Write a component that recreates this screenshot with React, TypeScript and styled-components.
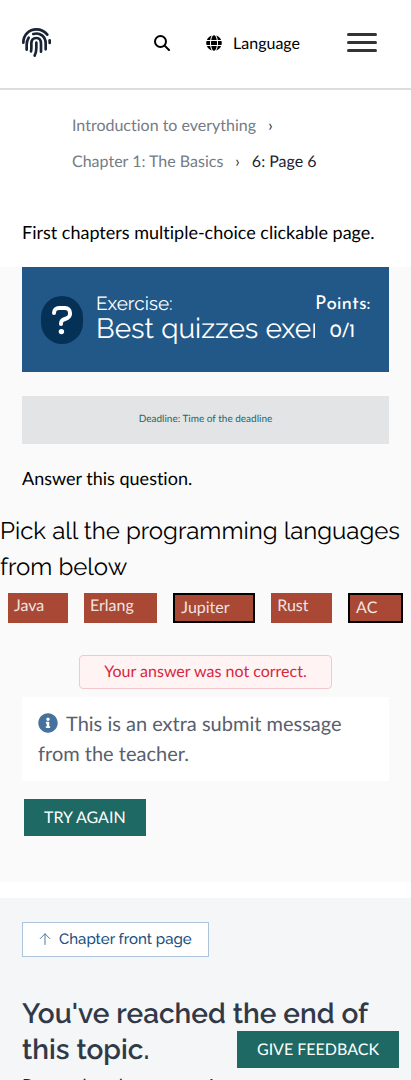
import React from "react";
import styled, { createGlobalStyle } from "styled-components";
import { FaGlobe, FaInfoCircle } from "react-icons/fa";

const body = `Lato, "Open Sans", sans-serif`;
const heading = `Raleway, Lato, "Open Sans", sans-serif`;
const display = `"Josefin Sans", Lato, sans-serif`;

const GlobalStyle = createGlobalStyle`
  *, *::before, *::after { box-sizing: border-box; }
  body {
    margin: 0;
    background: #fff;
    color: #000;
    font-family: ${body};
    font-size: 18px;
    font-variant-ligatures: no-common-ligatures;
    text-rendering: geometricPrecision;
    -webkit-font-smoothing: antialiased;
  }
  h1, h2, p, ol { margin: 0; padding: 0; }
  button { font-family: inherit; text-rendering: inherit; cursor: pointer; }
`;

const Header = styled.header`
  display: flex;
  align-items: center;
  height: 90px;
  padding: 0 34px 4px 22px;
  border-bottom: 2px solid #dcdcdc;
`;

const LogoLink = styled.a`
  display: flex;
  margin-right: auto;
`;

const NavButton = styled.button<{ $gap: number }>`
  display: flex;
  align-items: center;
  gap: 11px;
  padding: 2px 0 0;
  margin-right: ${(p) => p.$gap}px;
  border: 0;
  background: none;
  color: #000;
  font-size: 16px;
  line-height: 25px;
`;

const MenuButton = styled.button`
  display: flex;
  flex-direction: column;
  gap: 5px;
  width: 30px;
  padding: 0;
  border: 0;
  background: none;
`;

const MenuBar = styled.span`
  height: 3px;
  border-radius: 2px;
  background: #333;
`;

const Breadcrumbs = styled.nav`
  padding: 18px 72px 0;
`;

const CrumbList = styled.ol`
  display: flex;
  flex-wrap: wrap;
  list-style: none;
  font-size: 16px;
  line-height: 36px;
`;

const Crumb = styled.li`
  color: #1a2333;

  &:not(:last-child)::after {
    content: "›";
    margin: 0 12px;
    color: #333;
  }
`;

const CrumbLink = styled.a`
  color: #767b85;
  text-decoration: none;
`;

const Paragraph = styled.p`
  padding: 0 22px;
  font-size: 18px;
  line-height: 30px;
`;

const Intro = styled(Paragraph)`
  margin: 37px 0 20px;
`;

const Exercise = styled.section`
  padding-bottom: 46px;
  background: #fafafa;
`;

const ExerciseHeader = styled.div`
  display: flex;
  align-items: center;
  height: 105px;
  margin: 0 22px 24px;
  padding: 0 19px;
  background: #215887;
  color: #fff;
`;

const QuestionBadge = styled.span`
  display: flex;
  flex: none;
  align-items: center;
  justify-content: center;
  width: 42px;
  height: 48px;
  margin-right: 13px;
  border-radius: 21px;
  background: #063157;
`;

const ExerciseTitle = styled.h2`
  flex: 1;
  min-width: 0;
  overflow: hidden;
  padding-bottom: 2px;
  font-family: ${heading};
  font-size: 28px;
  font-weight: 400;
  line-height: 30px;
  white-space: nowrap;
`;

const ExerciseLabel = styled.span`
  display: block;
  font-size: 19px;
  line-height: 20px;
`;

const Points = styled.div`
  flex: none;
  padding-bottom: 1px;
  font-family: ${display};
  font-size: 19px;
  line-height: 28px;
  text-align: center;
`;

const Deadline = styled.div`
  margin: 0 22px 19px;
  padding-bottom: 2px;
  background: #e2e4e6;
  color: #1f6964;
  font-size: 10px;
  line-height: 46px;
  text-align: center;
`;

const QuizTitle = styled.h2`
  margin-top: 20px;
  font-family: ${heading};
  font-size: 24px;
  font-weight: 400;
  line-height: 36px;
`;

const Options = styled.div`
  display: flex;
  gap: 16px;
  margin: 8px 8px 32px;
`;

const Option = styled.button<{ $selected?: boolean }>`
  display: flex;
  flex: 1 1 auto;
  height: 30px;
  padding: 3px 6px;
  border: ${(p) => (p.$selected ? "2px solid #000" : "0")};
  background: #a84835;
  color: #f1e4e1;
  font-size: 16px;
  line-height: 20px;
`;

const Feedback = styled.div`
  width: fit-content;
  margin: 0 auto 8px;
  padding: 0 24px;
  border: 1px solid #f3c6cb;
  border-radius: 4px;
  background: #fff3f4;
  color: #d5283e;
  font-size: 16px;
  line-height: 32px;
`;

const TeacherMessage = styled.p`
  margin: 0 22px 18px;
  padding: 12px 16px;
  background: #fff;
  color: #595f6d;
  font-size: 20px;
  line-height: 30px;
`;

const InfoIcon = styled(FaInfoCircle)`
  margin-right: 8px;
  color: #44729d;
  vertical-align: -2px;
`;

const PrimaryButton = styled.button`
  display: block;
  height: 37px;
  padding: 0 20px;
  border: 0;
  background: #1f6964;
  color: #fff;
  font-size: 16px;
  line-height: 36px;
  text-transform: uppercase;
`;

const TryAgain = styled(PrimaryButton)`
  margin-left: 24px;
`;

const FeedbackButton = styled(PrimaryButton)`
  position: fixed;
  right: 12px;
  bottom: 12px;
`;

const Footer = styled.section`
  margin-top: 16px;
  padding: 24px 22px 48px;
  background: #f4f6f8;
`;

const FrontPageLink = styled.a`
  display: flex;
  width: fit-content;
  align-items: center;
  gap: 8px;
  height: 35px;
  padding: 0 16px 2px;
  border: 1px solid #adc4da;
  background: #fff;
  color: #1a4f80;
  font-family: ${heading};
  font-size: 15px;
  font-weight: 500;
  text-decoration: none;
`;

const EndTitle = styled.h1`
  margin-top: 39px;
  color: #313947;
  font-family: ${heading};
  font-size: 28px;
  font-weight: 600;
  line-height: 36px;
`;

const EndText = styled.p`
  margin-top: 3px;
  color: #1a2333;
  font-size: 18px;
  line-height: 28px;
`;

const Logo = () => (
  <svg width="29" height="29" viewBox="0 0 87 87" fill="none" stroke="#1a2333" strokeWidth="8" strokeLinecap="round" aria-hidden="true">
    <path d="M4 44C4 20 22 4 43 4C57 4 68 10 76 20" />
    <path d="M83 37V45" />
    <path d="M14 65V50C14 41 16 35 20 29" />
    <path d="M34 18C54 12 71 26 71 46V64" />
    <path d="M27 70C29 62 28 54 28 47C28 36 34 30 43 30C52 30 57 37 57 47V71" />
    <path d="M43 44V60C43 70 41 77 38 83" />
  </svg>
);

const SearchIcon = () => (
  <svg width="16" height="16" viewBox="0 0 16 16" fill="none" stroke="#000" strokeWidth="2" strokeLinecap="round" aria-hidden="true">
    <circle cx="6.5" cy="6.5" r="5.5" />
    <path d="M10.6 10.6L15 15" />
  </svg>
);

const QuestionIcon = () => (
  <svg width="22" height="30" viewBox="0 0 22 30" fill="none" stroke="#fff" strokeWidth="4" strokeLinecap="round" strokeLinejoin="round" aria-hidden="true">
    <path d="M3 8C3 5 5 3 8 3H14C17 3 19 5 19 8V9C19 12 17 13 14 14C11 15 10 16 10 19" />
    <circle cx="10.4" cy="26.6" r="2.7" fill="#fff" stroke="none" />
  </svg>
);

const ArrowUp = () => (
  <svg width="12" height="12" viewBox="0 0 12 12" fill="none" stroke="#4d7ba5" strokeWidth="1" strokeLinecap="round" strokeLinejoin="round" aria-hidden="true">
    <path d="M6 11.5V.8M1.2 5.6L6 .8L10.8 5.6" />
  </svg>
);

const options = [
  { label: "Java" },
  { label: "Erlang" },
  { label: "Jupiter", selected: true },
  { label: "Rust" },
  { label: "AC", selected: true },
];

export default function App() {
  return (
    <>
      <GlobalStyle />
      <Header>
        <LogoLink href="#" aria-label="Home">
          <Logo />
        </LogoLink>
        <NavButton $gap={36} aria-label="Search">
          <SearchIcon />
        </NavButton>
        <NavButton $gap={47}>
          <FaGlobe size={16} />
          Language
        </NavButton>
        <MenuButton aria-label="Menu">
          <MenuBar />
          <MenuBar />
          <MenuBar />
        </MenuButton>
      </Header>
      <main>
        <Breadcrumbs aria-label="Breadcrumb">
          <CrumbList>
            <Crumb>
              <CrumbLink href="#">Introduction to everything</CrumbLink>
            </Crumb>
            <Crumb>
              <CrumbLink href="#">Chapter 1: The Basics</CrumbLink>
            </Crumb>
            <Crumb aria-current="page">6: Page 6</Crumb>
          </CrumbList>
        </Breadcrumbs>
        <Intro>First chapters multiple-choice clickable page.</Intro>
        <Exercise>
          <ExerciseHeader>
            <QuestionBadge>
              <QuestionIcon />
            </QuestionBadge>
            <ExerciseTitle>
              <ExerciseLabel>Exercise:</ExerciseLabel>
              Best quizzes exercise
            </ExerciseTitle>
            <Points>
              <div>Points:</div>
              <div>0/1</div>
            </Points>
          </ExerciseHeader>
          <Deadline>Deadline: Time of the deadline</Deadline>
          <Paragraph>Answer this question.</Paragraph>
          <QuizTitle>Pick all the programming languages from below</QuizTitle>
          <Options>
            {options.map((o) => (
              <Option key={o.label} $selected={o.selected} aria-pressed={!!o.selected}>
                {o.label}
              </Option>
            ))}
          </Options>
          <Feedback role="status">Your answer was not correct.</Feedback>
          <TeacherMessage>
            <InfoIcon size={20} />
            This is an extra submit message from the teacher.
          </TeacherMessage>
          <TryAgain>Try again</TryAgain>
        </Exercise>
        <Footer>
          <FrontPageLink href="#">
            <ArrowUp />
            Chapter front page
          </FrontPageLink>
          <EndTitle>You've reached the end of this topic.</EndTitle>
          <EndText>Proceed to the next topic</EndText>
        </Footer>
      </main>
      <FeedbackButton>Give feedback</FeedbackButton>
    </>
  );
}
